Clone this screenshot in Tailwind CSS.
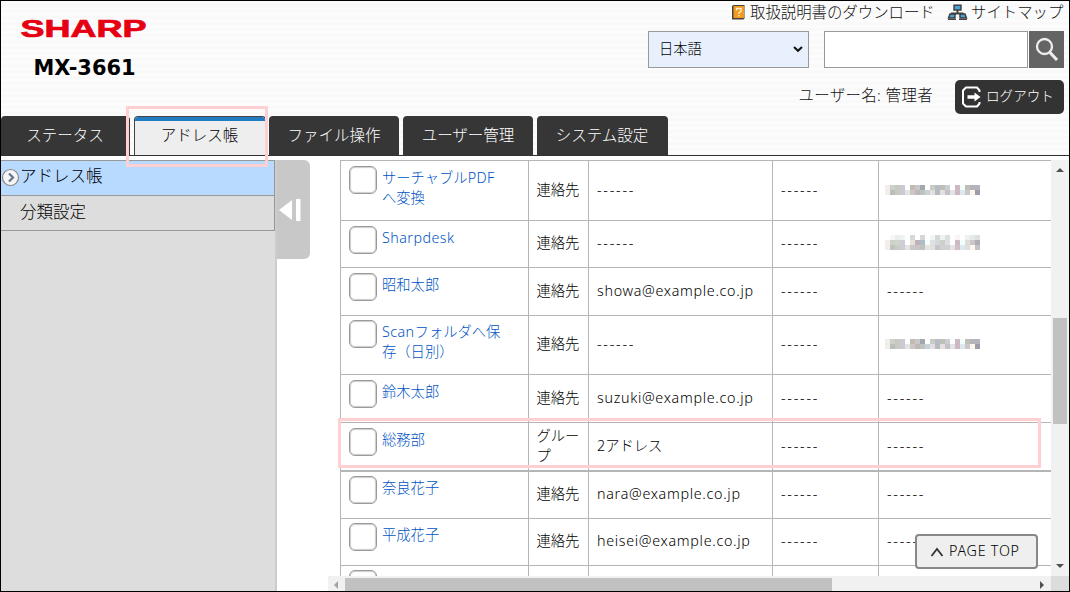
<!DOCTYPE html>
<html lang="ja">
<head>
<meta charset="utf-8">
<title>MX-3661</title>
<script src="https://cdn.jsdelivr.net/npm/@tailwindcss/browser@4"></script>
</head>
<body class="w-[1070px] h-[592px] overflow-hidden bg-white font-['Noto_Sans','Noto_Sans_CJK_JP',sans-serif] text-[14px] font-light text-black">
<div class="relative flex h-[592px] w-[1070px] flex-col overflow-hidden border border-black bg-white">

  <header class="flex h-[155px] shrink-0 flex-col justify-between border-b border-[#333] bg-[repeating-linear-gradient(to_bottom,#fcfcfc_0_3px,#f9f9f9_3px_6px)]">
    <div class="flex h-[115px] justify-between">
      <div class="pt-[14px] pl-[18px]">
        <svg class="block" width="132" height="27" viewBox="0 0 132 27" role="img" aria-label="SHARP"><text x="1.500" y="21.700" textLength="126" lengthAdjust="spacingAndGlyphs" font-family="Liberation Sans" font-weight="bold" font-size="23.500" fill="#e60012" stroke="#e60012" stroke-width="0.700">SHARP</text></svg>
        <svg class="mt-[12px] ml-[15px] block" width="110" height="26" viewBox="0 0 110 26"><text x="-0.500" y="21" textLength="102" lengthAdjust="spacingAndGlyphs" font-family="DejaVu Sans" font-weight="bold" font-size="21.500" fill="#000">MX-3661</text></svg>
      </div>
      <div class="flex w-[440px] flex-col items-end pr-[5px]">
        <div class="flex h-[23px] w-[333px] items-center text-[15.4px] text-[#111]">
          <svg class="mr-[4px] shrink-0" width="15" height="17" viewBox="0 0 15 17"><path d="M1 2l1.500-1h11v13.500l-1 1H1z" fill="#444"/><rect x="2.500" y="2" width="10.500" height="12" fill="#f29a1d"/><path d="M5.500 6.500V4.500h4.500v3L8 8.700V10M8 11v1.500" fill="none" stroke="#fff3d6" stroke-width="1.300"/></svg>
          <span class="w-[197px] whitespace-nowrap">取扱説明書のダウンロード</span>
          <svg class="mr-[3px] shrink-0" width="21" height="17" viewBox="0 0 21 17"><path d="M10.500 6v3M5 12V9.500h10.500V12" fill="none" stroke="#444" stroke-width="2"/><g fill="#4ba3d8" stroke="#3a3a3a" stroke-width="1.400"><rect x="7" y="1.200" width="7" height="4.800"/><path d="M3 10h5v4H1.500zM13 10h5l1.500 4H13z"/></g><path d="M1 15.500h8M12 15.500h8" stroke="#444"/></svg>
          <span class="whitespace-nowrap">サイトマップ</span>
        </div>
        <div class="mt-[7px] flex h-[37px] shrink-0">
          <div class="mr-[15px] flex w-[161px] items-center justify-between border border-[#999] bg-[#e8f0fe] pr-[4px] pb-[2px] pl-[10px] text-[14.300px] text-black"><span>日本語</span><svg width="12" height="8" viewBox="0 0 12 8"><path d="M2 2l4 3.800L10 2" fill="none" stroke="#111" stroke-width="2"/></svg></div>
          <div class="w-[204px] border border-[#999] bg-white"></div>
          <div class="flex w-[36px] items-center justify-center border-l border-white bg-[#646464] pr-[2px]"><svg width="26" height="28" viewBox="0 0 26 28"><circle cx="11.500" cy="10.500" r="7.500" fill="none" stroke="#eee" stroke-width="2.300"/><path d="M16.500 16l7.500 8" stroke="#eee" stroke-width="3"/></svg></div>
        </div>
        <div class="mt-[12px] flex h-[34px] shrink-0 items-center">
          <span class="mr-[22px] pb-[3px] text-[15.400px] tracking-[0.400px] text-[#111]">ユーザー名: 管理者</span>
          <div class="flex h-[34px] w-[109px] items-center rounded-[5px] bg-[#333] pl-[6px] text-[13.600px] font-normal text-white"><svg class="mr-[4px]" width="21" height="24" viewBox="0 0 21 24"><path d="M18.500 7V5.500L16 2.500H5L2 5.500v13l3 3h11l2.500-3V17" fill="none" stroke="#fff" stroke-width="2" stroke-linejoin="round"/><path d="M6.500 10.300h7V7.500L19.500 12l-6 4.500v-2.800h-7z" fill="#fff"/></svg><span class="pb-[2px] font-light whitespace-nowrap">ログアウト</span></div>
        </div>
      </div>
    </div>
    <nav class="flex h-[39px] shrink-0 gap-[4px] text-[15.500px] leading-[38px] text-white">
      <div class="w-[129px] rounded-t-[4px] bg-[#363636] pr-[1px] text-center">ステータス</div>
      <div class="w-[132px] overflow-hidden rounded-t-[4px] border-x border-t border-[#444] bg-[#eee] pr-[1px] text-center text-black"><div class="-mr-[1px] h-[4px] bg-[#217cc2]"></div><div class="leading-[28px]">アドレス帳</div></div>
      <div class="-ml-[1px] w-[130px] rounded-t-[4px] bg-[#363636] text-center">ファイル操作</div>
      <div class="w-[130px] rounded-t-[4px] bg-[#363636] text-center">ユーザー管理</div>
      <div class="w-[131px] rounded-t-[4px] bg-[#363636] pr-[1px] text-center">システム設定</div>
    </nav>
  </header>

  <main class="flex min-h-0 flex-1 pt-[4px]">
    <aside class="w-[276px] shrink-0 border-r-2 border-[#ccc] bg-[#ddd] text-[16.500px] text-black">
      <div class="flex h-[36px] items-start border-y border-r border-[#999] bg-[#b8daff] leading-[29px]"><svg class="mt-[7px] shrink-0" width="19" height="19" viewBox="0 0 19 19"><circle cx="9.500" cy="9.500" r="8" fill="#f5f5f8" stroke="#888" stroke-width="1.200"/><path d="M8 5.500l4 4-4 4" fill="none" stroke="#66758a" stroke-width="2.200"/></svg>アドレス帳</div>
      <div class="h-[35px] border-r border-b border-[#999] pl-[19px] leading-[31px]">分類設定</div>
    </aside>
    <div class="flex h-[99px] w-[33px] shrink-0 items-center rounded-r-[6px] bg-[#c8c8c8] pl-[2px]"><svg width="24" height="22" viewBox="0 0 24 22"><path d="M0 11L13 1v20zM17 0h4.500v22H17z" fill="#fff"/></svg></div>
    <section class="flex min-w-0 flex-1 flex-col pl-[18px]">
      <div class="flex min-h-0 flex-1">
        <div class="min-w-0 flex-1 overflow-hidden pl-[12px]">
          <div id="rows" class="border-t border-l border-[#b5b5b5] text-[14.300px] leading-[20px]"></div>
        </div>
        <div class="flex w-[18px] shrink-0 flex-col items-center bg-[#f1f1f1]">
          <svg width="18" height="18" viewBox="0 0 18 18"><path d="M5 12l4-4 4 4z" fill="#505050"/></svg>
          <div class="mt-[140px] h-[106px] w-[14px] bg-[#c1c1c1]"></div>
          <svg class="mt-auto" width="18" height="18" viewBox="0 0 18 18"><path d="M5 6h8l-4 4z" fill="#505050"/></svg>
        </div>
      </div>
      <div class="flex h-[15px] shrink-0 items-center bg-[#f1f1f1]">
        <svg width="17" height="15" viewBox="0 0 17 15"><path d="M10 5v8L6 9z" fill="#a3a3a3"/></svg>
        <div class="mt-[2px] h-[13px] w-[487px] bg-[#c1c1c1]"></div>
        <svg class="ml-auto" width="17" height="15" viewBox="0 0 17 15"><path d="M6 5v8l4-4z" fill="#505050"/></svg>
        <div class="h-[15px] w-[18px] bg-[#dcdcdc]"></div>
      </div>
    </section>
  </main>

  <div class="absolute top-[105px] left-[125px] h-[61px] w-[142px] border-3 border-[#ffd0d2]"></div>
  <div class="absolute top-[417px] left-[337px] h-[50px] w-[703px] border-3 border-[#ffd0d2]"></div>
  <div class="absolute top-[533px] left-[914px] flex h-[35px] w-[123px] items-center rounded-[4px] border-2 border-[#888] bg-[#efefef] pl-[13px] text-[14.300px] text-black"><svg class="mr-[5px]" width="14" height="12" viewBox="0 0 14 12"><path d="M1.500 10L7 3l5.500 7" fill="none" stroke="#333" stroke-width="1.800"/></svg><span class="pb-[1px] tracking-[0.750px] whitespace-nowrap">PAGE TOP</span></div>
</div>
<script>
const D = '------';
const data = [
  ['サーチャブル<span class="tracking-[0.400px]">PDF</span><br>へ変換', '連絡先', D, 0, 60],
  ['<span class="tracking-[0.450px]">Sharpdesk</span>', '連絡先', D, 1, 47],
  ['昭和太郎', '連絡先', 'showa@example.co.jp', D, 48],
  ['<span class="tracking-[0.450px]">Scan</span>フォルダへ保<br>存（日別）', '連絡先', D, 0, 59],
  ['鈴木太郎', '連絡先', 'suzuki@example.co.jp', D, 48],
  ['総務部', 'グルー<br>プ', '2アドレス', D, 49],
  ['奈良花子', '連絡先', 'nara@example.co.jp', D, 47],
  ['平成花子', '連絡先', 'heisei@example.co.jp', D, 47],
  ['', '', '', '', 48]
];
// Rows that sit one pixel higher inside their borders
const raised = [3, 6, 7, 8];
// Rows of 5px blocks that mask an IP address
const low = ['f1eeeb ccd1c9 c8c9c3 cbcad4 fff c0bdb0 c9c6cd a0a9ac fff c8cdc6 b8bcc4 bfc0b5 c8ced2 fff cdb9c3 f1ffff c0bfb5 b5b4bd b5b4bd'.split(' '),
             'f1eeeb b9c0b9 c8c9c3 cbcad4 e4e4e4 d1c6c7 bdb8bb c0c3bb c9d1dc e2dfde b5b9c0 e6dfdd c3c2c8 e4e4e4 cdb9c3 dde9ee c9c7c9 fcf6ec 9b9da8'.split(' ')];
const high = ['fff f7f7f5 ebeeed eef4f5 fff d5d8d5 fff d5d8db fff f2f6f3 d4d8d8 f0f3ef dce0e3 fff faf4f6 fff f0f0ed e4eae9 dce0e2'.split(' '),
              'f1eeeb ccd1c9 cfd4cc d1cbd5 fff e4e3d6 bdb2b9 afbcc3 f1ffff dfe0df d5d8da cbd1c9 dcdfe3 fff cdb9c3 f1ffff e2dcdb c9c7c9 b2acb4'.split(' '),
              'f1eeeb c0c6be c8ccc7 d1cbd5 e4e4e4 d1c6c7 c9c4c5 c0c3bb e4e4e4 e2dfde c3c6ca d1d1d1 d1d1d5 e4e4e4 d0bfc9 dde9ee dedede fcf6ec c3c2c8'.split(' ')];
const mosaic = (m, cls) => '<svg class="' + cls + '" width="95" height="' + m.length * 5 + '" shape-rendering="crispEdges">' +
  m.map((r, y) => r.map((c, x) => `<rect x="${x * 5}" y="${y * 5}" width="5" height="5" fill="#${c}"/>`).join('')).join('') + '</svg>';
const cell = 'flex items-center border-r border-[#b5b5b5] pl-[8px] pb-[2px] whitespace-nowrap';
const dashes = `<span class="tracking-[1.750px]">${D}</span>`;
document.getElementById('rows').innerHTML = data.map((r, i) => `
<div class="grid grid-cols-[188px_60px_184px_106px_1fr] ${i === 5 ? 'border-b-2' : 'border-b'} border-[#b5b5b5]" style="height:${r[4]}px">
  <div class="flex items-start border-r border-[#b5b5b5] ${raised.includes(i) ? 'pt-[4px]' : 'pt-[5px]'} pl-[8px]">
    <div class="mr-[5px] h-[28px] w-[28px] shrink-0 rounded-[6px] border-[1.5px] border-[#999] bg-white shadow-[inset_0_0_1px_1px_#ccc]"></div>
    <div class="mt-[2px] -ml-px whitespace-nowrap pl-px text-[#0054c4]">${r[0]}</div>
  </div>
  <div class="${cell}"><span class="-ml-[0.5px]">${r[1]}</span></div>
  <div class="${cell}">${r[2] === D ? dashes : `<span class="${r[2].includes('@') ? 'tracking-[0.700px]' : ''}">${r[2]}</span>`}</div>
  <div class="${cell}">${r[0] ? dashes : ''}</div>
  <div class="flex items-center pb-[2px] pl-[8px]">${r[3] === 0 ? mosaic(low, '-ml-[2px] block') : r[3] === 1 ? mosaic(high, '-ml-[2px] mb-[2px] block') : r[0] ? dashes : ''}</div>
</div>`).join('');
</script>
</body>
</html>
